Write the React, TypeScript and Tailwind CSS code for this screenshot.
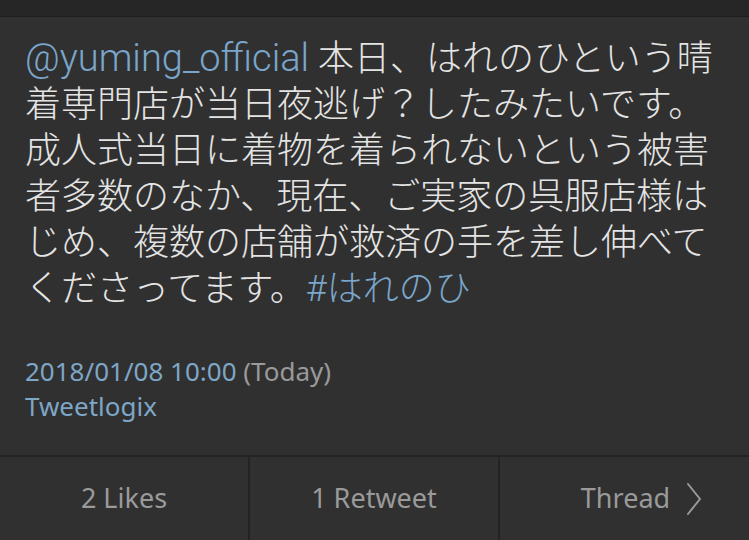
export default function App() {
  const font = { fontFamily: '"Noto Sans", "Noto Sans CJK JP", sans-serif' };
  const body = { fontFamily: 'Roboto, "Noto Sans CJK JP", sans-serif' };
  return (
    <div className="w-[749px] h-[540px] overflow-hidden bg-[#303030] flex flex-col" style={font}>
      <div className="h-[17px] shrink-0 bg-[#262626] border-b border-[#1d1d1d]" />

      <div className="px-[25px] pt-[18px] text-[36px] leading-[46px] text-[#e4e4e4] font-light whitespace-nowrap" style={body}>
        <span className="text-[#7aa6cb] text-[38px]">@yuming_official</span> 本日、はれのひという晴
        <br />
        着専門店が当日夜逃げ？したみたいです。
        <br />
        成人式当日に着物を着られないという被害
        <br />
        者多数のなか、現在、ご実家の呉服店様は
        <br />
        じめ、複数の店舗が救済の手を差し伸べて
        <br />
        くださってます。<span className="text-[#7aa6cb]">#はれのひ</span>
      </div>

      <div className="px-[25px] mt-[42px] text-[26px] leading-[35px]">
        <div>
          <span className="text-[#7ea6c7]">2018/01/08 10:00</span>{' '}
          <span className="text-[#9a9a9a]">(Today)</span>
        </div>
        <div className="text-[#7ea6c7]">Tweetlogix</div>
      </div>

      <div className="mt-auto h-[85px] shrink-0 border-t-2 border-[#232323] grid grid-cols-[250px_250px_1fr] text-[27px] text-[#9a9a9a]">
        <div className="flex items-center justify-center border-r-2 border-[#232323]">2 Likes</div>
        <div className="flex items-center justify-center border-r-2 border-[#232323]">1 Retweet</div>
        <div className="flex items-center justify-center gap-[16px] pl-[34px]">
          <span>Thread</span>
          <svg width="16" height="34" viewBox="0 0 16 34" fill="none" stroke="#9a9a9a" strokeWidth="2" strokeLinecap="round" strokeLinejoin="round">
            <polyline points="2,2 14,17 2,32" />
          </svg>
        </div>
      </div>
    </div>
  );
}
